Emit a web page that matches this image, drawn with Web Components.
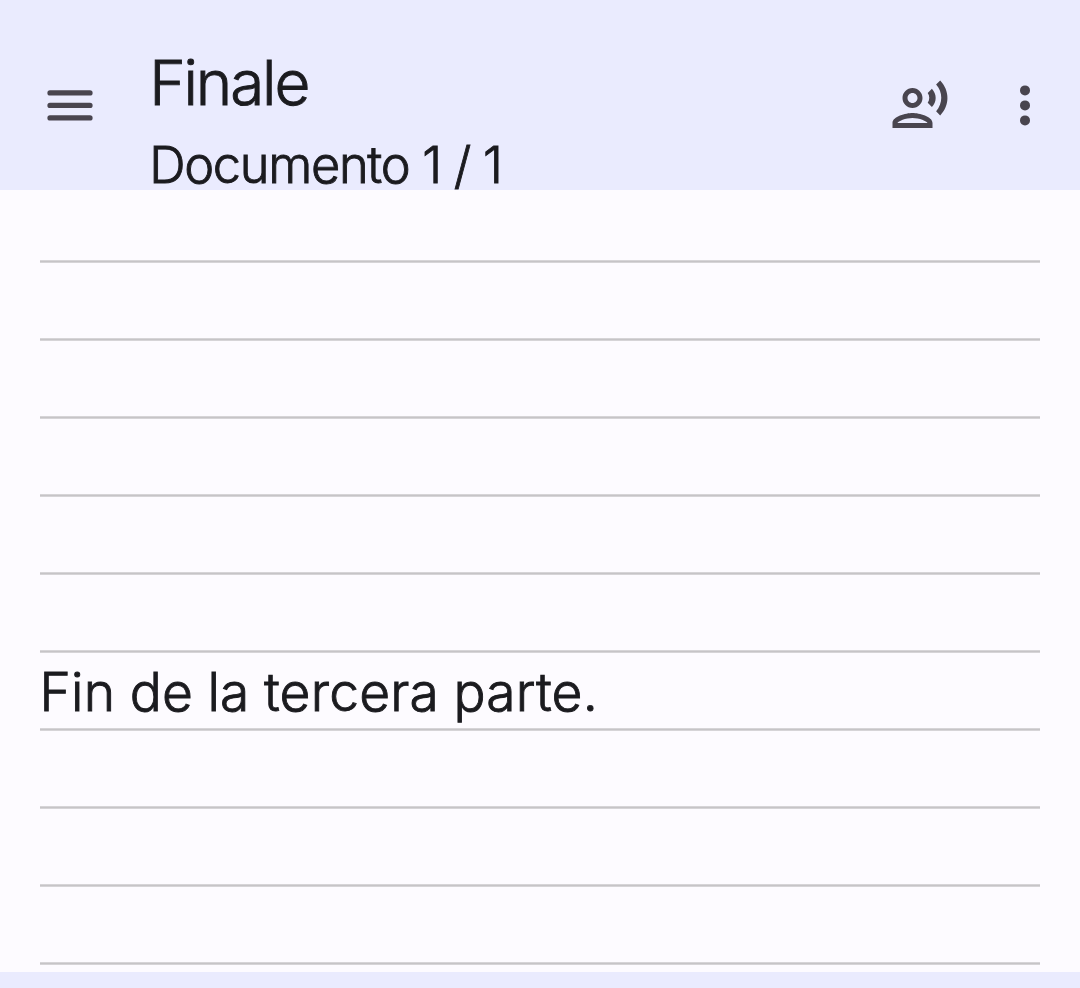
<!DOCTYPE html>
<html lang="es">
<head>
<meta charset="utf-8">
<title>Finale</title>
<style>
    body {
        margin: 0;
        overflow: hidden;
        font-family: "Inter", sans-serif;
        font-weight: 300;
        color: #1b1b1f;
        -webkit-text-stroke: 0.9px #1b1b1f;
        --bar: #eaebfe;
        --paper: #fdfbff;
        --icon: #49454f;
        --rule: #c6c4c7;
        --rule-edge: #d6d4d7;
    }
</style>
</head>
<body>
<reader-app>
    <app-bar slot="header">
        <icon-button slot="start" name="menu" label="Menú"></icon-button>
        <span slot="title">Finale</span>
        <span slot="subtitle">Documento 1 / 1</span>
        <icon-button slot="end" name="voice" label="Leer"></icon-button>
        <icon-button slot="end" name="more" label="Más"></icon-button>
    </app-bar>
    <ruled-page>
        <page-line></page-line>
        <page-line></page-line>
        <page-line></page-line>
        <page-line></page-line>
        <page-line></page-line>
        <page-line></page-line>
        <page-line>Fin de la tercera parte.</page-line>
        <page-line></page-line>
        <page-line></page-line>
        <page-line></page-line>
    </ruled-page>
</reader-app>
<script>
const ICONS = {
    menu: '<path d="M4 7h16M4 12h16M4 17h16" fill="none" stroke="currentColor" stroke-width="2.1" stroke-linecap="round"/>',
    more: '<circle cx="12" cy="6" r="2"/><circle cx="12" cy="12" r="2"/><circle cx="12" cy="18" r="2"/>',
    voice: '<path d="M9 13c2.21 0 4-1.79 4-4s-1.79-4-4-4-4 1.79-4 4 1.79 4 4 4zm0-6c1.1 0 2 .9 2 2s-.9 2-2 2-2-.9-2-2 .9-2 2-2zm0 8c-2.67 0-8 1.34-8 4v2h16v-2c0-2.66-5.33-4-8-4zm-6 4c.22-.72 3.31-2 6-2 2.7 0 5.8 1.29 6 2H3zM15.08 7.05c.84 1.18.84 2.71 0 3.89l1.68 1.69c2.02-2.02 2.02-5.07 0-7.27l-1.68 1.69zM20.07 2l-1.63 1.63c2.77 3.02 2.77 7.56 0 10.74L20.07 16c3.9-3.89 3.91-9.95 0-14z"/>'
};

class ReaderApp extends HTMLElement {
    connectedCallback() {
        this.attachShadow({ mode: 'open' });
        this.shadowRoot.innerHTML = `
            <style>
                :host {
                    display: grid;
                    grid-template-rows: 190px 1fr 16px;
                    height: 988px;
                    background: var(--bar);
                }
            </style>
            <slot name="header"></slot>
            <slot></slot>
        `;
    }
}

class AppBar extends HTMLElement {
    connectedCallback() {
        this.attachShadow({ mode: 'open' });
        this.shadowRoot.innerHTML = `
            <style>
                :host {
                    display: flex;
                    align-items: flex-start;
                    box-sizing: border-box;
                    padding: 45px 25px 0 40px;
                    background: var(--bar);
                }
                .start, .actions {
                    display: flex;
                    padding-top: 30px;
                }
                .actions {
                    gap: 45px;
                }
                .titles {
                    flex: 1;
                    padding-left: 49.2px;
                    white-space: nowrap;
                }
                .title {
                    font-size: 62px;
                    line-height: 76px;
                    letter-spacing: -2.15px;
                }
                .subtitle {
                    padding-top: 12px;
                    font-size: 50.5px;
                    line-height: 64px;
                    letter-spacing: -1.3px;
                }
            </style>
            <div class="start"><slot name="start"></slot></div>
            <div class="titles">
                <div class="title"><slot name="title"></slot></div>
                <div class="subtitle"><slot name="subtitle"></slot></div>
            </div>
            <div class="actions"><slot name="end"></slot></div>
        `;
    }
}

class IconButton extends HTMLElement {
    connectedCallback() {
        this.attachShadow({ mode: 'open' });
        this.shadowRoot.innerHTML = `
            <style>
                :host {
                    display: block;
                    width: 60px;
                    height: 60px;
                    color: var(--icon);
                }
                button {
                    display: block;
                    padding: 0;
                    border: 0;
                    background: none;
                    color: inherit;
                    cursor: pointer;
                }
                svg {
                    display: block;
                    fill: currentColor;
                }
            </style>
            <button aria-label="${this.getAttribute('label')}">
                <svg width="60" height="60" viewBox="0 -0.16 24 24">${ICONS[this.getAttribute('name')]}</svg>
            </button>
        `;
    }
}

class RuledPage extends HTMLElement {
    connectedCallback() {
        this.attachShadow({ mode: 'open' });
        this.shadowRoot.innerHTML = `
            <style>
                :host {
                    display: flex;
                    flex-direction: column;
                    justify-content: flex-end;
                    box-sizing: border-box;
                    min-height: 0;
                    padding: 0 40px 7px;
                    overflow: hidden;
                    background: var(--paper);
                }
            </style>
            <slot></slot>
        `;
    }
}

class PageLine extends HTMLElement {
    connectedCallback() {
        this.attachShadow({ mode: 'open' });
        this.shadowRoot.innerHTML = `
            <style>
                :host {
                    display: block;
                    flex: none;
                    height: 78px;
                    background: linear-gradient(var(--rule-edge) 1px, var(--rule) 1px 2px, var(--rule-edge) 2px) bottom / 100% 3px no-repeat;
                    font-size: 53.3px;
                    line-height: 77px;
                    letter-spacing: 0.2px;
                    word-spacing: -0.8px;
                    text-indent: -0.5px;
                    white-space: nowrap;
                }
            </style>
            <slot></slot>
        `;
    }
}

customElements.define('reader-app', ReaderApp);
customElements.define('app-bar', AppBar);
customElements.define('icon-button', IconButton);
customElements.define('ruled-page', RuledPage);
customElements.define('page-line', PageLine);
</script>
</body>
</html>
